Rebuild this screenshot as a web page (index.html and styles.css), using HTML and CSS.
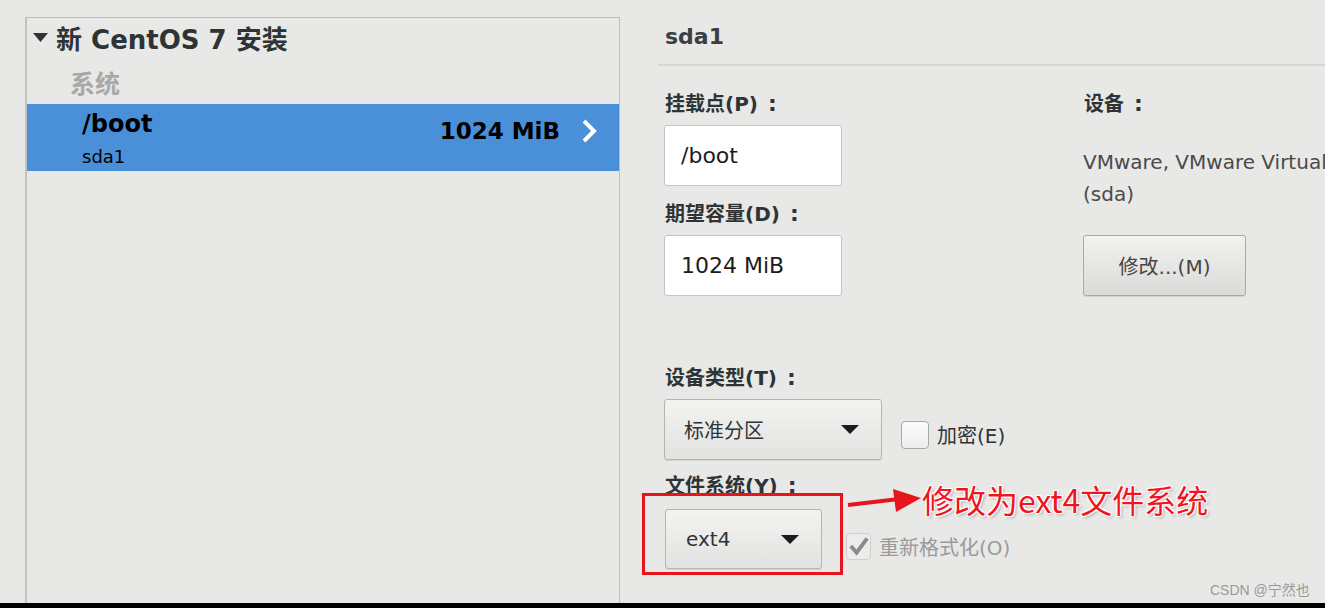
FILE: index.html
```html
<!DOCTYPE html>
<html lang="zh-CN">
<head>
<meta charset="utf-8">
<title>CentOS 7 分区</title>
<link rel="stylesheet" href="styles.css">
</head>
<body>
<div class="screen">
  <div class="main">
    <aside class="left">
      <div class="panel">
        <div class="tree-head">
          <svg class="expander" width="15" height="9" viewBox="0 0 15 9"><polygon points="0,0 15,0 7.5,9" fill="#2e3436"/></svg>
          <span>新 CentOS 7 安装</span>
        </div>
        <div class="group-label">系统</div>
        <div class="part-row">
          <div class="part-names">
            <div class="part-mount">/boot</div>
            <div class="part-dev">sda1</div>
          </div>
          <div class="part-size">1024 MiB</div>
          <svg class="chevron" width="16" height="26" viewBox="0 0 16 26"><polyline points="3,3 13,13 3,23" fill="none" stroke="#fff" stroke-width="4"/></svg>
        </div>
      </div>
    </aside>
    <section class="right">
      <div class="title">sda1</div>
      <div class="form">
        <div class="col col-left">
          <div class="label l-mount">挂载点(P)<span class="colon">:</span></div>
          <div class="entry">/boot</div>
          <div class="label l-size">期望容量(D)<span class="colon">:</span></div>
          <div class="entry">1024 MiB</div>
          <div class="label l-type">设备类型(T)<span class="colon">:</span></div>
          <div class="combo-row">
            <div class="combo combo-type">
              <span>标准分区</span>
              <svg width="18" height="9" viewBox="0 0 18 9"><polygon points="0,0 18,0 9,9" fill="#1c1c1c"/></svg>
            </div>
            <div class="check">
              <span class="box"></span>
              <span class="check-text">加密(E)</span>
            </div>
          </div>
          <div class="label l-fs">文件系统(Y)<span class="colon">:</span></div>
          <div class="combo-row fs-row">
            <div class="combo combo-fs">
              <span>ext4</span>
              <svg width="18" height="9" viewBox="0 0 18 9"><polygon points="0,0 18,0 9,9" fill="#1c1c1c"/></svg>
            </div>
            <div class="check disabled">
              <span class="box checked">
                <svg width="24" height="24" viewBox="0 0 24 24"><polyline points="4,12 10,19 21,4" fill="none" stroke="#8a8a8a" stroke-width="4"/></svg>
              </span>
              <span class="check-text">重新格式化(O)</span>
            </div>
          </div>
        </div>
        <div class="col col-right">
          <div class="label l-dev">设备<span class="colon">:</span></div>
          <div class="dev-text">VMware, VMware Virtual S<br>(sda)</div>
          <div class="button">修改...(M)</div>
        </div>
      </div>
    </section>
  </div>
  <div class="bottom-bar"></div>

  <div class="red-box"></div>
  <svg class="red-arrow" width="80" height="30" viewBox="0 0 80 30">
    <line x1="3" y1="20" x2="54" y2="14" stroke="#e8141b" stroke-width="4"/>
    <polygon points="48,4 76,13 51,27" fill="#e8141b"/>
  </svg>
  <div class="note">修改为ext4文件系统</div>
  <div class="watermark">CSDN @宁然也</div>
</div>
</body>
</html>
```

FILE: styles.css
```css
* { box-sizing: border-box; }
html, body { margin: 0; padding: 0; background: #e8e8e7; }
body { font-family: "DejaVu Sans", "Noto Sans CJK SC", sans-serif; color: #2e3436; }

.screen {
  position: relative;
  width: 1325px;
  height: 608px;
  overflow: hidden;
  display: flex;
  flex-direction: column;
  background: #e8e8e7;
}
.main { flex: 1; display: flex; min-height: 0; }
.bottom-bar { height: 5px; background: #000; }

/* left tree */
.left { width: 620px; flex-shrink: 0; padding: 17px 0 0 25px; }
.panel {
  height: 100%;
  border: 1px solid #bdbdbb;
  border-bottom: none;
  border-left: 2px solid #c2c2c0;
}
.tree-head {
  height: 38px;
  display: flex;
  align-items: center;
  gap: 8px;
  padding-left: 6px;
  font-size: 26px;
  font-weight: bold;
  color: #2e3436;
}
.group-label {
  padding: 15px 0 5px 43px;
  line-height: 28px;
  font-size: 25px;
  color: #a8a8a8;
  font-weight: bold;
}
.part-row {
  height: 67px;
  background: #4a90d9;
  display: flex;
  align-items: flex-start;
  padding: 0 22px 0 55px;
}
.part-names { flex: 1; padding-top: 6px; }
.part-mount { font-size: 24px; font-weight: bold; line-height: 28px; color: #000; }
.part-dev { font-size: 18px; line-height: 22px; margin-top: 8px; color: #000; }
.part-size { font-size: 23px; font-weight: bold; line-height: 28px; color: #000; margin: 13px 21px 0 0; }
.chevron { display: block; margin-top: 14px; }

/* right form */
.right { flex: 1; padding-left: 38px; min-width: 0; }
.title {
  height: 66px;
  padding: 22px 0 0 7px;
  line-height: 30px;
  font-size: 22px;
  font-weight: bold;
  color: #3a3f41;
  border-bottom: 2px solid #d6d6d5;
}
.form { display: flex; padding-left: 6px; }
.col { display: flex; flex-direction: column; align-items: flex-start; }
.col-left { width: 419px; flex-shrink: 0; }
.col-right { flex: 1; min-width: 0; white-space: nowrap; }

.label {
  height: 24px;
  font-size: 20px;
  font-weight: bold;
  line-height: 24px;
  padding-left: 1px;
  color: #2e3436;
}
.colon { margin-left: 10px; font-size: 22px; }
.l-mount, .l-dev { margin-top: 26px; }
.l-size { margin-top: 16px; }
.l-type { margin-top: 70px; }
.l-fs { margin-top: 14px; }

.entry {
  margin-top: 9px;
  width: 178px;
  height: 61px;
  background: #fff;
  border: 1px solid #c4c4c3;
  border-radius: 3px;
  padding-left: 16px;
  display: flex;
  align-items: center;
  font-size: 22px;
  color: #1c1c1c;
}

.combo-row { display: flex; align-items: center; margin-top: 9px; }
.fs-row { margin-top: 11px; }
.combo {
  height: 61px;
  display: flex;
  align-items: center;
  justify-content: space-between;
  padding: 0 22px 0 19px;
  font-size: 20px;
  color: #2e3436;
  border: 1px solid #b4b4b3;
  border-radius: 3px;
  background: linear-gradient(#f3f3f2, #e2e2e1);
  box-shadow: 0 1px 0 rgba(0,0,0,0.08);
}
.combo-type { width: 218px; }
.combo-fs { width: 157px; height: 60px; margin-left: 1px; padding-left: 20px; }

.check { display: flex; align-items: center; margin-left: 19px; margin-top: 10px; }
.box {
  width: 28px;
  height: 28px;
  border: 1px solid #a9a9a8;
  border-radius: 4px;
  background: linear-gradient(#fcfcfc, #ededec);
  display: flex;
  align-items: center;
  justify-content: center;
}
.check-text { font-size: 20px; margin-left: 8px; color: #2e3436; }
.disabled { margin-left: 24px; margin-top: 14px; }
.disabled .box { width: 25px; height: 27px; border-color: #cfcfce; background: #ececeb; }
.disabled .check-text { color: #9a9a9a; }

.dev-text {
  margin-top: 30px;
  font-size: 20px;
  line-height: 32px;
  color: #4a4a4a;
}
.button {
  margin-top: 25px;
  width: 163px;
  height: 61px;
  display: flex;
  align-items: center;
  justify-content: center;
  font-size: 20px;
  color: #454545;
  border: 1px solid #a9a9a8;
  border-radius: 3px;
  background: linear-gradient(#f2f2f1, #dadad9);
  box-shadow: 0 1px 0 rgba(0,0,0,0.1);
}

/* annotation overlay */
.red-box {
  position: absolute;
  left: 642px;
  top: 493px;
  width: 201px;
  height: 82px;
  border: 3px solid #e8141b;
}
.red-arrow { position: absolute; left: 845px; top: 485px; }
.note {
  position: absolute;
  left: 922px;
  top: 479px;
  font-family: "Noto Sans CJK SC", sans-serif;
  font-size: 32px;
  line-height: 40px;
  color: #f0141e;
  text-shadow: 0 0 2px #fff, 1px 1px 1px #fff, -1px -1px 1px #fff, 1px -1px 1px #fff, -1px 1px 1px #fff, 2px 2px 3px rgba(0,0,0,0.25);
  white-space: nowrap;
}
.watermark {
  position: absolute;
  left: 1210px;
  top: 581px;
  font-family: "Liberation Sans", "Noto Sans CJK SC", sans-serif;
  font-size: 14px;
  line-height: 18px;
  color: #9a9a9a;
  white-space: nowrap;
}
```
